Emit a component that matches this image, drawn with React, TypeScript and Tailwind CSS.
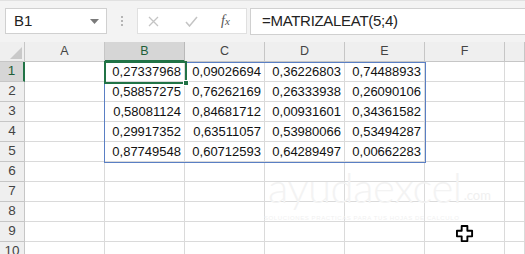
import React from 'react';

const cols = ['A', 'B', 'C', 'D', 'E', 'F', ''];

const data: string[][] = [
  ['0,27337968', '0,09026694', '0,36226803', '0,74488933'],
  ['0,58857275', '0,76262169', '0,26333938', '0,26090106'],
  ['0,58081124', '0,84681712', '0,00931601', '0,34361582'],
  ['0,29917352', '0,63511057', '0,53980066', '0,53494287'],
  ['0,87749548', '0,60712593', '0,64289497', '0,00662283'],
];

const rows = [1, 2, 3, 4, 5, 6, 7, 8, 9, 10];

const FormulaBar = () => (
  <div className="h-[42px] bg-[#f3f3f3] border-t border-[#e1e1e1] flex items-start pt-[7px] pl-[5px]">
    <div className="w-[102px] h-[26px] bg-white border border-[#d0d0d0] flex items-center justify-between pl-[8px] pr-[7px]">
      <span className="text-[15px] text-[#222]">B1</span>
      <svg width="9" height="5" viewBox="0 0 9 5">
        <path d="M0 0 L9 0 L4.5 5 Z" fill="#7a7a7a" />
      </svg>
    </div>
    <div className="w-[30px] h-[26px] flex flex-col items-center justify-center gap-[2px]">
      <span className="w-[2px] h-[2px] bg-[#b5b5b5]" />
      <span className="w-[2px] h-[2px] bg-[#b5b5b5]" />
      <span className="w-[2px] h-[2px] bg-[#b5b5b5]" />
    </div>
    <div className="w-[110px] h-[26px] bg-white border border-[#e0e0e0] flex items-center">
      <svg className="ml-[10px]" width="11" height="11" viewBox="0 0 11 11">
        <path d="M1 1 L10 10 M10 1 L1 10" stroke="#c4c4c4" strokeWidth="1.3" />
      </svg>
      <svg className="ml-[26px]" width="13" height="11" viewBox="0 0 13 11">
        <path d="M1 6 L4.5 10 L12 1" stroke="#c4c4c4" strokeWidth="1.5" fill="none" />
      </svg>
      <span className="ml-[23px] text-[14px] italic text-[#555] font-['Liberation_Serif',serif] leading-none">
        f<span className="text-[11px]">x</span>
      </span>
    </div>
    <div className="ml-[3px] flex-1 h-[27px] bg-white border-y border-l border-[#d0d0d0] flex items-center pl-[11px]">
      <span className="text-[15px] text-[#222] tracking-[-0.3px]">=MATRIZALEAT(5;4)</span>
    </div>
  </div>
);

const Sheet = () => (
  <div className="relative">
    <div className="grid grid-cols-[25px_repeat(6,80px)_1fr] auto-rows-[20px]">
      <div className="bg-[#efefef] border-r border-b border-[#c6c6c6] relative">
        <svg className="absolute right-[2px] bottom-[2px]" width="12" height="12" viewBox="0 0 12 12">
          <path d="M12 0 L12 12 L0 12 Z" fill="#c9c9c9" />
        </svg>
      </div>
      {cols.map((c) => (
        <div
          key={c || 'g'}
          className={
            c === 'B'
              ? 'bg-[#d6d6d6] border-r border-b-2 border-r-[#b9b9b9] border-b-[#217346] flex items-center justify-center text-[12.5px] text-[#1e5e38]'
              : 'bg-[#efefef] border-r border-b border-[#c6c6c6] flex items-center justify-center text-[12.5px] text-[#444]'
          }
        >
          {c}
        </div>
      ))}
      {rows.map((r) => (
        <React.Fragment key={r}>
          <div
            className={
              r === 1
                ? 'bg-[#d6d6d6] border-r-2 border-b border-r-[#217346] border-b-[#c6c6c6] flex items-center justify-center text-[13.5px] text-[#1e5e38]'
                : 'bg-[#efefef] border-r border-b border-[#c6c6c6] flex items-center justify-center text-[13.5px] text-[#444]'
            }
          >
            {r}
          </div>
          {cols.map((c, ci) => {
            const v = ci >= 1 && ci <= 4 && r <= 5 ? data[r - 1][ci - 1] : '';
            return (
              <div
                key={c || 'g'}
                className="bg-white border-r border-b border-[#dadada] flex items-center justify-end pr-[3px] text-[13px] text-[#111]"
              >
                {v}
              </div>
            );
          })}
        </React.Fragment>
      ))}
    </div>

    {/* spill range outline */}
    <div className="absolute left-[104px] top-[20px] w-[322px] h-[101px] border border-[#5a7fc4] pointer-events-none" />
    {/* active cell */}
    <div className="absolute left-[104px] top-[19px] w-[83px] h-[23px] border-2 border-[#217346] pointer-events-none" />
    <div className="absolute left-[183px] top-[38px] w-[6px] h-[6px] bg-[#217346] border border-white pointer-events-none" />

    {/* watermark */}
    <div className="absolute left-[268px] top-[124px] flex items-end pointer-events-none select-none">
      <span className="text-[42px] leading-none font-light tracking-[-0.5px] text-[#f3f3f3] font-['Lato',sans-serif]">
        ayudaexcel
      </span>
      <span className="text-[13px] leading-none mb-[6px] ml-[2px] text-[#f0f0f0] font-['Lato',sans-serif]">.com</span>
    </div>
    <div className="absolute left-[264px] top-[172px] text-[6px] tracking-[0.6px] text-[#f1f1f1] pointer-events-none whitespace-nowrap">
      SOLUCIONES PRACTICAS PARA TUS HOJAS DE CALCULO
    </div>

    {/* mouse cursor */}
    <svg className="absolute left-[456px] top-[183px]" width="18" height="18" viewBox="0 0 19 19">
      <path
        d="M6 1 H12 V6 H17 V12 H12 V17 H6 V12 H1 V6 H6 Z"
        fill="#fff"
        stroke="#000"
        strokeWidth="2"
        strokeLinejoin="round"
      />
    </svg>
  </div>
);

export default function App() {
  return (
    <div className="w-[525px] h-[254px] overflow-hidden bg-white font-['Liberation_Sans',Arial,sans-serif]">
      <FormulaBar />
      <Sheet />
    </div>
  );
}
